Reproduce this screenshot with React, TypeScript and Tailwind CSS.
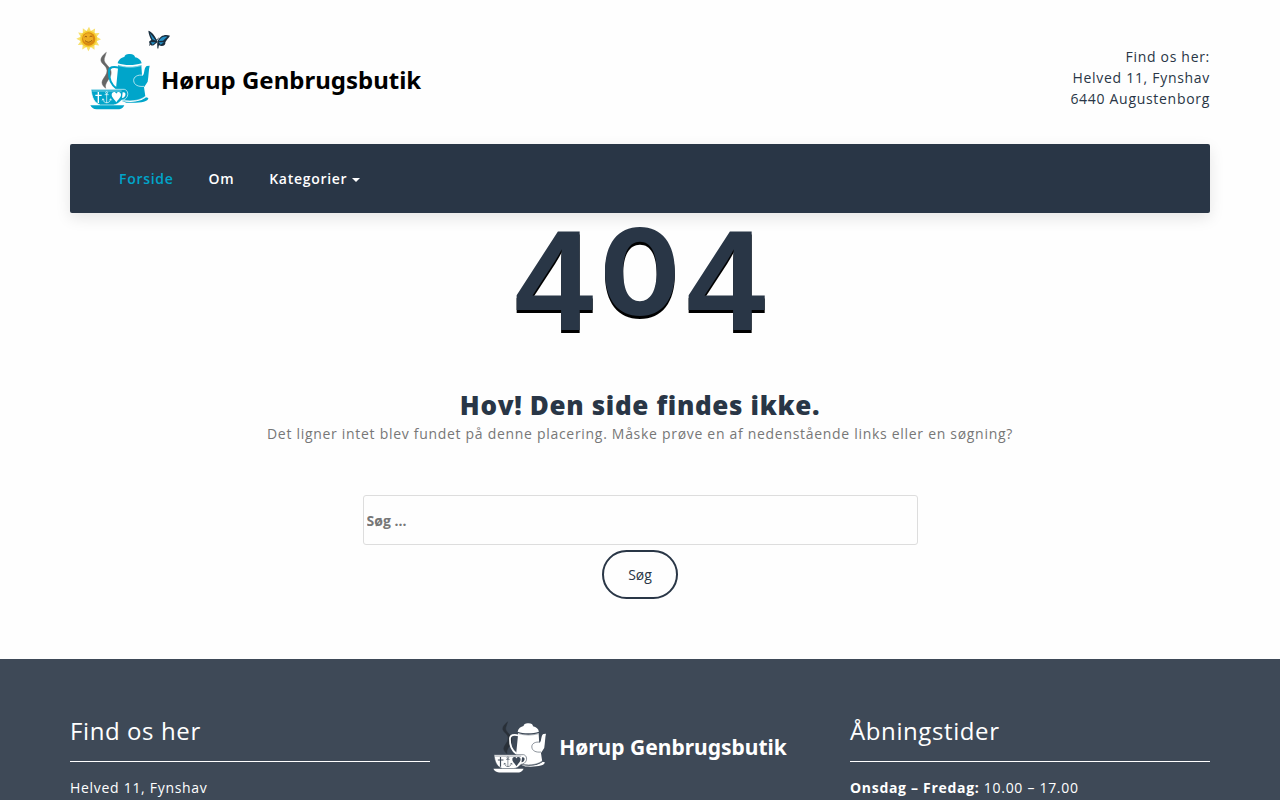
import type { ReactNode } from 'react';

interface NavItem {
  label: string;
  active?: boolean;
  dropdown?: boolean;
}

const navItems: NavItem[] = [
  { label: 'Forside', active: true },
  { label: 'Om' },
  { label: 'Kategorier', dropdown: true },
];

interface TeapotProps {
  fill: string;
  ground: string;
  steam: string;
}

const rays = [0, 30, 60, 90, 120, 150, 180, 210, 240, 270, 300, 330];

function Teapot({ fill, ground, steam }: TeapotProps) {
  return (
    <g>
      {/* steam */}
      <path
        d="M109 97 C101 104 91 112 93 123 C96 134 110 137 111 151 C112 166 96 176 96 188 C96 196 103 200 107 205 C104 193 112 184 119 173 C128 158 122 146 113 137 C106 129 101 125 103 115 Z"
        fill={steam}
        stroke={steam}
        strokeWidth="1.5"
      />
      {/* handle, lid, body */}
      <path
        d="M147 143 C130 138 117 141 117 154 C116 176 123 193 139 205"
        fill="none"
        stroke={fill}
        strokeWidth="6"
      />
      <path
        d="M143 130 C145 119 154 113 163 111 C164 104 171 101 180 102 C189 102 195 106 195 112 C206 114 214 121 215 130 C193 137 164 137 143 130 Z"
        fill={fill}
      />
      <path
        d="M145 135 C166 142 192 142 214 135 L216 166 C225 168 220 144 230 138 L239 137 C236 148 236 167 233 185 L222 202 L226 229 C210 246 164 246 143 236 L137 215 Z"
        fill={fill}
      />
      <path
        d="M147 137 C169 143 191 143 213 137"
        fill="none"
        stroke={ground}
        strokeWidth="1.5"
      />
      <path
        d="M219 166 C204 163 190 170 191 182 C192 195 205 201 222 199"
        fill="none"
        stroke={ground}
        strokeWidth="2"
      />
      <path
        d="M154 242 C185 250 215 244 228 232 L235 234 C235 246 207 250 169 248 Z"
        fill={fill}
      />
      <path
        d="M160 240 C188 246 212 240 226 229"
        fill="none"
        stroke={ground}
        strokeWidth="1.5"
      />
      {/* cup and saucer */}
      <path
        d="M63 208 L163 208 C178 211 178 238 154 241 C148 249 140 254 130 255 L91 255 C72 249 66 232 63 208 Z"
        fill={fill}
        stroke={ground}
        strokeWidth="2"
      />
      <path d="M67 213 H155" stroke={ground} strokeWidth="1.5" />
      <path
        d="M158 217 C171 215 168 233 156 234 Z"
        fill={ground}
      />
      <path
        d="M61 256 H163 C160 263 155 267 148 268 H80 C70 268 64 263 61 256 Z"
        fill={fill}
      />
      <path
        d="M85 216 V249 M76 226 H95"
        stroke={ground}
        strokeWidth="4"
      />
      <path
        d="M110 220 V249 M104 224 H116 M99 237 C99 252 121 252 122 237 M96 241 L99 236 L103 241 M118 241 L122 236 L125 241"
        fill="none"
        stroke={ground}
        strokeWidth="2"
      />
      <circle cx="110" cy="218" r="3" fill="none" stroke={ground} strokeWidth="2" />
      <path
        d="M139 247 C134 238 125 232 125 224 C125 215 136 213 139 221 C142 213 153 215 153 224 C153 232 144 238 139 247 Z"
        fill={ground}
      />
    </g>
  );
}

function Sun() {
  return (
    <g>
      {rays.map((angle) => (
        <path
          key={angle}
          d="M48 36 L57 20 L64 36 Z"
          fill="#f8e06a"
          transform={`rotate(${angle} 56 57)`}
        />
      ))}
      <circle cx="56" cy="57" r="25" fill="#f6cb30" />
      <circle cx="56" cy="57" r="20" fill="#d98a10" />
      <circle cx="54" cy="55" r="15" fill="#eeae22" />
      <path
        d="M44 51 Q48 47 51 51 M59 50 Q63 46 67 50 M45 62 Q56 72 66 61"
        fill="none"
        stroke="#8b4b0b"
        strokeWidth="2.5"
      />
    </g>
  );
}

function Butterfly() {
  return (
    <g>
      <path
        d="M262 64 C255 47 247 36 235 32 C236 42 240 53 244 60 L238 64 C236 72 243 79 251 76 L262 67 Z"
        fill="#182c3c"
      />
      <path
        d="M263 64 C270 47 284 42 300 47 C295 55 288 61 286 67 C288 76 277 81 267 76 L262 88 Z"
        fill="#182c3c"
      />
      <path
        d="M258 62 L239 38 L247 58 Z M257 67 L242 67 L248 74 Z M266 63 C273 51 282 48 292 50 L279 62 Z M266 67 L282 67 L272 74 Z"
        fill="#258fc5"
      />
      <path d="M260 59 L265 85 M260 60 L254 54 M262 60 L266 53" stroke="#182c3c" strokeWidth="2" />
      <path d="M237 76 L240 74" stroke="#182c3c" strokeWidth="3" />
    </g>
  );
}

function FooterColumn({ title, children }: { title: string; children: ReactNode }) {
  return (
    <div>
      <h2 className="border-b border-white pb-3 text-2xl leading-9 tracking-wide">{title}</h2>
      <p className="mt-3.5 leading-6">{children}</p>
    </div>
  );
}

export default function App() {
  return (
    <div className="min-h-screen bg-[#fefefe] font-['Open_Sans',sans-serif] text-sm tracking-wider text-[#293646]">
      <div className="mx-auto max-w-[1170px] px-[15px]">
        <header className="flex h-36 items-start justify-between">
          <a href="#" className="mt-5 flex items-center gap-2 text-black">
            <svg viewBox="0 0 249 300" className="h-[100px] w-[83px] overflow-visible" aria-hidden="true">
              <Sun />
              <Butterfly />
              <Teapot fill="#00a5ca" ground="#ffffff" steam="#666666" />
            </svg>
            <span className="mt-5 font-['Noto_Sans',sans-serif] text-2xl font-bold tracking-normal">
              Hørup Genbrugsbutik
            </span>
          </a>
          <address className="mt-[46px] text-right leading-[21px] not-italic">
            Find os her:
            <br />
            Helved 11, Fynshav
            <br />
            6440 Augustenborg
          </address>
        </header>

        <nav className="rounded-xs bg-[#293646] px-[49px] shadow-[0_5px_15px_rgba(0,0,0,0.1)]">
          <ul className="flex h-[69px] items-center gap-[35px] font-semibold text-white">
            {navItems.map((item) => (
              <li key={item.label}>
                <a
                  href="#"
                  className={item.active ? 'text-[#00a5ca]' : 'flex items-center gap-[5px]'}
                >
                  {item.label}
                  {item.dropdown && (
                    <svg viewBox="0 0 8 4" className="mt-0.5 h-1 w-2" aria-hidden="true">
                      <path d="M0 0 H8 L4 4 Z" fill="currentColor" />
                    </svg>
                  )}
                </a>
              </li>
            ))}
          </ul>
        </nav>

        <main className="flex flex-col items-center pb-[60px] text-center">
          <h1 className="flex h-[173px] items-start gap-1.5 font-['Liberation_Sans',sans-serif] text-[142px] leading-[136px] font-bold tracking-normal [text-shadow:0_3px_0_#000]">
            <span>4</span>
            <span className="font-['Inter',sans-serif] text-[120px] leading-[118px]">0</span>
            <span>4</span>
          </h1>
          <h2 className="text-[26px] leading-[38px] font-extrabold tracking-wide">
            Hov! Den side findes ikke.
          </h2>
          <p className="text-[#777777]">
            Det ligner intet blev fundet på denne placering. Måske prøve en af nedenstående links
            eller en søgning?
          </p>
          <form className="mt-[51px] flex w-full max-w-[555px] flex-col items-center gap-[5px]">
            <input
              type="search"
              aria-label="Søg"
              placeholder="Søg ..."
              className="h-[50px] w-full rounded-[3px] border border-[#dddddd] px-[3px] font-bold tracking-normal placeholder:text-[#777777]"
            />
            <button
              type="submit"
              className="h-[49px] rounded-[25px] border-2 border-[#293646] px-6 tracking-normal"
            >
              Søg
            </button>
          </form>
        </main>
      </div>

      <footer className="bg-[#3e4957] text-white">
        <div className="mx-auto grid max-w-[1170px] grid-cols-3 gap-[30px] px-[15px] pt-[54px]">
          <FooterColumn title="Find os her">Helved 11, Fynshav</FooterColumn>
          <div className="mt-2 flex items-start justify-center gap-3">
            <svg viewBox="60 94 182 176" className="h-[52px] w-[54px]" aria-hidden="true">
              <Teapot fill="#ffffff" ground="#3e4957" steam="#293038" />
            </svg>
            <span className="mt-2.5 font-['Noto_Sans',sans-serif] text-[21px] leading-8 font-bold tracking-normal">
              Hørup Genbrugsbutik
            </span>
          </div>
          <FooterColumn title="Åbningstider">
            <strong>Onsdag – Fredag:</strong> 10.00 – 17.00
          </FooterColumn>
        </div>
      </footer>
    </div>
  );
}
